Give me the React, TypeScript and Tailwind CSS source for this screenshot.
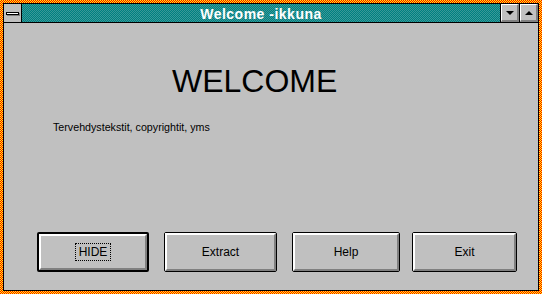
import React from "react";

const Btn = ({ label, def, w }: { label: string; def?: boolean; w: string }) => (
  <div
    className={`${w} h-[40px] rounded-[2px] border-black bg-[#c0c0c0] ${def ? "border-2" : "border"} flex`}
  >
    <div className="flex-1 flex items-center justify-center border-t-2 border-l-2 border-white border-b-2 border-r-2 border-b-[#808080] border-r-[#808080]">
      <span
        className={`text-[12px] text-black leading-none ${def ? "outline outline-1 outline-dotted outline-black outline-offset-[2px] px-[1px]" : ""}`}
        style={{ fontFamily: '"Liberation Sans", Arial, sans-serif' }}
      >
        {label}
      </span>
    </div>
  </div>
);

export default function App() {
  const sans = { fontFamily: '"Liberation Sans", Arial, sans-serif' };
  return (
    <div className="relative w-[542px] h-[294px] p-[3px] bg-[#ff0000]">
      <svg className="absolute inset-0" width="542" height="294" shapeRendering="crispEdges">
        <defs>
          <pattern id="chk" width="2" height="2" patternUnits="userSpaceOnUse">
            <rect x="0" y="0" width="2" height="2" fill="#ff0000" />
            <rect x="0" y="0" width="1" height="1" fill="#ffff00" />
            <rect x="1" y="1" width="1" height="1" fill="#ffff00" />
          </pattern>
          <pattern id="teal" width="2" height="2" patternUnits="userSpaceOnUse">
            <rect x="0" y="0" width="2" height="2" fill="#008080" />
            <rect x="0" y="0" width="1" height="1" fill="#3a9898" />
            <rect x="1" y="1" width="1" height="1" fill="#3a9898" />
          </pattern>
        </defs>
        <rect width="542" height="294" fill="url(#chk)" />
      </svg>
      <div className="relative w-full h-full border border-black flex flex-col bg-[#c0c0c0]">
        {/* title bar */}
        <div className="h-[19px] flex border-b border-black shrink-0">
          <div className="w-[18px] bg-[#c0c0c0] border-r border-black flex items-center justify-center">
            <div className="relative w-[13px] h-[3px]">
              <div className="absolute left-[1px] top-[1px] w-[13px] h-[3px] bg-[#808080]" />
              <div className="absolute left-0 top-0 w-[13px] h-[3px] bg-white border border-black" />
            </div>
          </div>
          <div className="relative flex-1 flex items-center justify-center">
            <svg className="absolute inset-0 w-full h-full" shapeRendering="crispEdges">
              <rect width="100%" height="100%" fill="url(#teal)" />
            </svg>
            <span className="relative text-white font-bold text-[14px] tracking-[0.5px] leading-none mt-[1px]" style={sans}>
              Welcome -ikkuna
            </span>
          </div>
          <div className="w-[19px] border-l border-black bg-[#c0c0c0] flex">
            <div className="flex-1 flex items-center justify-center border-t border-l border-white border-b-2 border-r-2 border-b-[#808080] border-r-[#808080]">
              <div className="w-0 h-0 border-l-[4px] border-r-[4px] border-t-[4px] border-l-transparent border-r-transparent border-t-black" />
            </div>
          </div>
          <div className="w-[19px] border-l border-black bg-[#c0c0c0] flex">
            <div className="flex-1 flex items-center justify-center border-t border-l border-white border-b-2 border-r-2 border-b-[#808080] border-r-[#808080]">
              <div className="w-0 h-0 border-l-[4px] border-r-[4px] border-b-[4px] border-l-transparent border-r-transparent border-b-black" />
            </div>
          </div>
        </div>
        {/* client */}
        <div className="flex-1 flex flex-col">
          <div className="mt-[42px] ml-[168px] text-[32px] leading-none text-black" style={sans}>
            WELCOME
          </div>
          <div className="mt-[25px] ml-[49px] text-[10.7px] leading-none text-black" style={sans}>
            Tervehdystekstit, copyrightit, yms
          </div>
          <div className="mt-[99px] ml-[33px] flex">
            <Btn label="HIDE" def w="w-[112px]" />
            <div className="w-[15px]" />
            <Btn label="Extract" w="w-[113px]" />
            <div className="w-[15px]" />
            <Btn label="Help" w="w-[108px]" />
            <div className="w-[12px]" />
            <Btn label="Exit" w="w-[105px]" />
          </div>
        </div>
      </div>
    </div>
  );
}
